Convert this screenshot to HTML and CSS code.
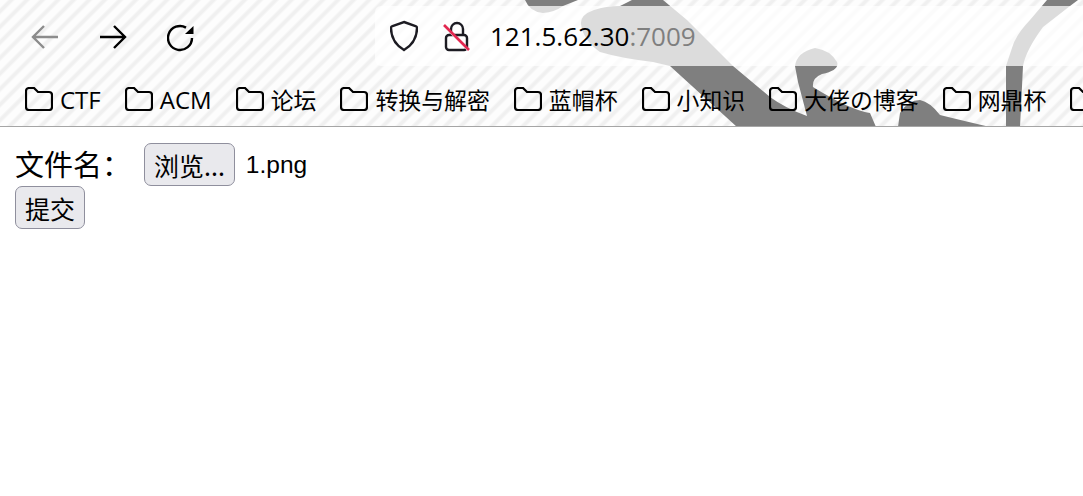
FILE: index.html
```html
<!DOCTYPE html>
<html lang="zh-CN">
<head>
<meta charset="UTF-8">
<meta name="viewport" content="width=device-width, initial-scale=1.0">
<title>文件上传</title>
<link rel="stylesheet" href="styles.css">
</head>
<body>
  <header class="browser-bar">
    <!-- theme artwork behind the toolbar -->
    <svg class="theme-art" width="1083" height="126" viewBox="0 0 1083 126" aria-hidden="true">
      <path d="M525 0 Q530 12 543 13 Q555 12 563 6 L578 0 Z"/>
      <path d="M632 0 L620 6 Q606 6 594 10 Q580 15 581 24 Q583 40 600 52 Q620 58 653 62 L670 66 L737 127 L876 127 L870 113 Q850 110 813 87 Q812 78 822 74 Q840 70 837 62 Q830 50 815 48 Q797 52 795 66 L798 82 L807 116 Q785 108 770 97 L733 66 L687 20 L663 0 Z"/>
      <path d="M898 127 L900 113 Q908 100 920 100 Q930 102 940 115 Q960 120 990 127 Z"/>
      <path d="M1047 0 L1030 20 Q1015 36 1012 48 L1006 66 L1006 127 L1020 127 L1023 66 Q1026 50 1043 27 L1070 6 L1078 0 Z"/>
    </svg>

    <div class="toolbar">
      <nav class="nav-buttons">
        <svg class="nav-icon nav-icon-off" width="28" height="28" viewBox="0 0 28 28"><path d="M27 13H2M13 2 2 13l11 11"/></svg>
        <svg class="nav-icon" width="28" height="28" viewBox="0 0 28 28"><path d="M1 13h25M15 2l11 11-11 11"/></svg>
        <svg class="nav-icon" width="28" height="28" viewBox="0 0 28 28">
          <path d="M25 14A12 12 0 1 1 19 3.600"/>
          <path class="icon-fill" d="M26.500 2v8h-8.500z"/>
        </svg>
      </nav>
      <div class="url-bar">
        <svg class="shield-icon" width="28" height="32" viewBox="0 0 28 32">
          <path d="M14 2 25.500 6c1 .4 1.500 1 1.500 2 0 10-4.500 17-13 22C5.500 25 1 18 1 8c0-1 .5-1.600 1.500-2z"/>
        </svg>
        <svg class="lock-icon" width="28" height="32" viewBox="0 0 28 32">
          <path d="M8 15V9a6 6 0 0 1 12 0v6"/>
          <rect x="3" y="15" width="21" height="15" rx="3"/>
          <path class="slash-gap" d="M2 7l24 24"/>
          <path class="slash" d="M1 5l25 25"/>
        </svg>
        <span class="url-text">121.5.62.30<span class="url-port">:7009</span></span>
      </div>
    </div>

    <div class="bookmarks">
      <a class="bookmark"><svg class="folder" width="28" height="24" viewBox="0 0 28 24"><path d="M1 4a3 3 0 0 1 3-3h5l4 4h11a3 3 0 0 1 3 3v12a3 3 0 0 1-3 3H4a3 3 0 0 1-3-3z"/></svg><span>CTF</span></a>
      <a class="bookmark"><svg class="folder" width="28" height="24" viewBox="0 0 28 24"><path d="M1 4a3 3 0 0 1 3-3h5l4 4h11a3 3 0 0 1 3 3v12a3 3 0 0 1-3 3H4a3 3 0 0 1-3-3z"/></svg><span>ACM</span></a>
      <a class="bookmark"><svg class="folder" width="28" height="24" viewBox="0 0 28 24"><path d="M1 4a3 3 0 0 1 3-3h5l4 4h11a3 3 0 0 1 3 3v12a3 3 0 0 1-3 3H4a3 3 0 0 1-3-3z"/></svg><span class="cjk">论坛</span></a>
      <a class="bookmark"><svg class="folder" width="28" height="24" viewBox="0 0 28 24"><path d="M1 4a3 3 0 0 1 3-3h5l4 4h11a3 3 0 0 1 3 3v12a3 3 0 0 1-3 3H4a3 3 0 0 1-3-3z"/></svg><span class="cjk">转换与解密</span></a>
      <a class="bookmark"><svg class="folder" width="28" height="24" viewBox="0 0 28 24"><path d="M1 4a3 3 0 0 1 3-3h5l4 4h11a3 3 0 0 1 3 3v12a3 3 0 0 1-3 3H4a3 3 0 0 1-3-3z"/></svg><span class="cjk">蓝帽杯</span></a>
      <a class="bookmark"><svg class="folder" width="28" height="24" viewBox="0 0 28 24"><path d="M1 4a3 3 0 0 1 3-3h5l4 4h11a3 3 0 0 1 3 3v12a3 3 0 0 1-3 3H4a3 3 0 0 1-3-3z"/></svg><span class="cjk">小知识</span></a>
      <a class="bookmark"><svg class="folder" width="28" height="24" viewBox="0 0 28 24"><path d="M1 4a3 3 0 0 1 3-3h5l4 4h11a3 3 0 0 1 3 3v12a3 3 0 0 1-3 3H4a3 3 0 0 1-3-3z"/></svg><span class="cjk">大佬の博客</span></a>
      <a class="bookmark"><svg class="folder" width="28" height="24" viewBox="0 0 28 24"><path d="M1 4a3 3 0 0 1 3-3h5l4 4h11a3 3 0 0 1 3 3v12a3 3 0 0 1-3 3H4a3 3 0 0 1-3-3z"/></svg><span class="cjk">网鼎杯</span></a>
      <a class="bookmark"><svg class="folder" width="28" height="24" viewBox="0 0 28 24"><path d="M1 4a3 3 0 0 1 3-3h5l4 4h11a3 3 0 0 1 3 3v12a3 3 0 0 1-3 3H4a3 3 0 0 1-3-3z"/></svg></a>
    </div>
  </header>

  <form class="upload-form">
    <div class="file-row">
      <label class="file-label">文件名：</label>
      <button type="button" class="form-btn">浏览...</button>
      <span class="file-name">1.png</span>
    </div>
    <button type="submit" class="form-btn">提交</button>
  </form>
</body>
</html>
```

FILE: styles.css
```css
* {
  box-sizing: border-box;
}

html, body {
  height: 100%;
}

body {
  margin: 0;
  background-color: #fff;
  color: #000;
  font-family: "Noto Sans CJK SC", "Liberation Sans", sans-serif;
  overflow: hidden;
}

.browser-bar {
  position: relative;
  height: 127px;
  border-bottom: 1px solid #a6a6a6;
  background: repeating-linear-gradient(135deg, #fdfdfd 0, #fdfdfd 5px, #f0f0f0 7px, #f0f0f0 9px, #fdfdfd 11px);
  overflow: hidden;
}

.theme-art {
  position: absolute;
  top: 0;
  left: 0;
  fill: #7f7f7f;
}

.toolbar {
  position: relative;
  display: flex;
  height: 72px;
  padding: 6px 0;
}

.nav-buttons {
  display: flex;
  align-items: center;
  gap: 40px;
  width: 375px;
  padding-top: 4px;
  padding-left: 31px;
}

.nav-icon {
  fill: none;
  stroke: #000;
  stroke-width: 2.4;
}

.nav-icon-off {
  stroke: #8c8c8c;
}

.icon-fill {
  fill: #000;
  stroke: none;
}

.url-bar {
  flex: 1;
  display: flex;
  align-items: center;
  padding-left: 15px;
  border-radius: 6px 0 0 6px;
  background-color: rgba(255, 255, 255, 0.73);
}

.shield-icon,
.lock-icon {
  fill: none;
  stroke: #1c1b22;
  stroke-width: 2.4;
}

.lock-icon {
  margin-left: 25px;
}

.slash {
  stroke: #e22850;
  stroke-width: 2.6;
}

.slash-gap {
  stroke: #fff;
  stroke-width: 2;
}

.url-text {
  margin-left: 19px;
  font-family: "Open Sans", sans-serif;
  font-size: 26px;
  white-space: nowrap;
}

.url-port {
  color: #7f7f7f;
}

.bookmarks {
  position: relative;
  display: flex;
  align-items: center;
  gap: 24px;
  height: 54px;
  padding-left: 25px;
  white-space: nowrap;
}

.bookmark {
  display: flex;
  flex-shrink: 0;
  align-items: center;
  gap: 7px;
  font-family: "Open Sans", sans-serif;
  font-size: 24px;
}

.bookmark .cjk {
  font-family: "Noto Sans CJK SC", sans-serif;
  font-size: 22.9px;
}

.folder {
  fill: none;
  stroke: #000;
  stroke-width: 2.2;
}

.upload-form {
  display: flex;
  flex-direction: column;
  align-items: flex-start;
  padding: 16px 15px 0;
}

.file-row {
  display: flex;
  align-items: center;
  height: 43px;
}

.file-label {
  width: 129px;
  margin-bottom: 3px;
  font-size: 29px;
}

.file-name {
  margin-left: 11px;
  font-family: "Liberation Sans", sans-serif;
  font-size: 24.5px;
}

.form-btn {
  height: 43px;
  padding: 0 9px;
  border: 1px solid #8f8f9d;
  border-radius: 7px;
  background-color: #e9e9ed;
  color: #000;
  font-family: "Noto Sans CJK SC", sans-serif;
  font-size: 25px;
}
```
